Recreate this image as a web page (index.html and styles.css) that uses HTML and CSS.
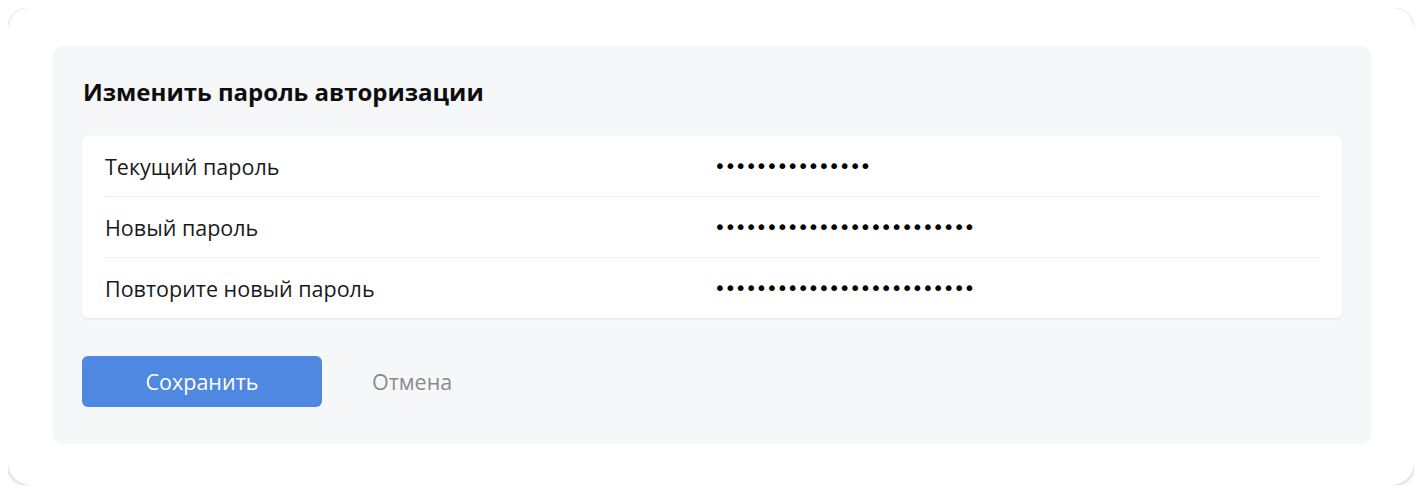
FILE: index.html
```html
<!DOCTYPE html>
<html lang="ru">
<head>
<meta charset="utf-8">
<title>Изменить пароль авторизации</title>
<link rel="stylesheet" href="styles.css">
</head>
<body>
<div class="outer">
  <section class="panel">
    <h2 class="title">Изменить пароль авторизации</h2>
    <div class="card">
      <div class="row">
        <span class="label">Текущий пароль</span>
        <span class="dots">•••••••••••••••</span>
      </div>
      <div class="row">
        <span class="label">Новый пароль</span>
        <span class="dots">•••••••••••••••••••••••••</span>
      </div>
      <div class="row">
        <span class="label">Повторите новый пароль</span>
        <span class="dots">•••••••••••••••••••••••••</span>
      </div>
    </div>
    <div class="actions">
      <button class="btn-save" type="button">Сохранить</button>
      <button class="btn-cancel" type="button">Отмена</button>
    </div>
  </section>
</div>
</body>
</html>
```
FILE: styles.css
```css
html, body {
  background: #ffffff;
}
body {
  margin: 8px;
  font-family: "Open Sans", "Noto Sans", sans-serif;
  color: #111;
}
.outer {
  box-sizing: border-box;
  width: 1406px;
  height: 477px;
  padding: 38px 42px 40px 44px;
  background: #fff;
  border-radius: 22px;
  box-shadow: 0 1px 4px rgba(0, 0, 0, 0.24);
}
.panel {
  background: #f6f7f9;
  border-radius: 12px;
  padding: 30px 30px 37px 30px;
}
.title {
  margin: 0 0 28px 1px;
  font-size: 24px;
  line-height: 32px;
  font-weight: 700;
  color: #0d0d0d;
}
.card {
  background: #fff;
  border-radius: 6px;
  box-shadow: 0 1px 3px rgba(0, 0, 0, 0.08);
  padding: 0 22px 0 23px;
}
.row {
  display: flex;
  align-items: center;
  height: 60px;
  border-bottom: 1px solid #eeeff1;
}
.row:last-child {
  border-bottom: none;
}
.label {
  width: 609px;
  font-size: 21.5px;
  color: #1a1a1a;
}
.dots {
  font-family: "DejaVu Sans", sans-serif;
  font-size: 20px;
  letter-spacing: -1.4px;
  color: #000;
}
.actions {
  display: flex;
  align-items: center;
  margin-top: 38px;
}
.btn-save {
  width: 240px;
  height: 51px;
  border: none;
  border-radius: 6px;
  background: #4f88e0;
  color: #fff;
  font-family: inherit;
  font-size: 21.5px;
  cursor: pointer;
}
.btn-cancel {
  margin-left: 50px;
  padding: 0;
  border: none;
  background: none;
  color: #8a8a8a;
  font-family: inherit;
  font-size: 21.5px;
  cursor: pointer;
}
```
